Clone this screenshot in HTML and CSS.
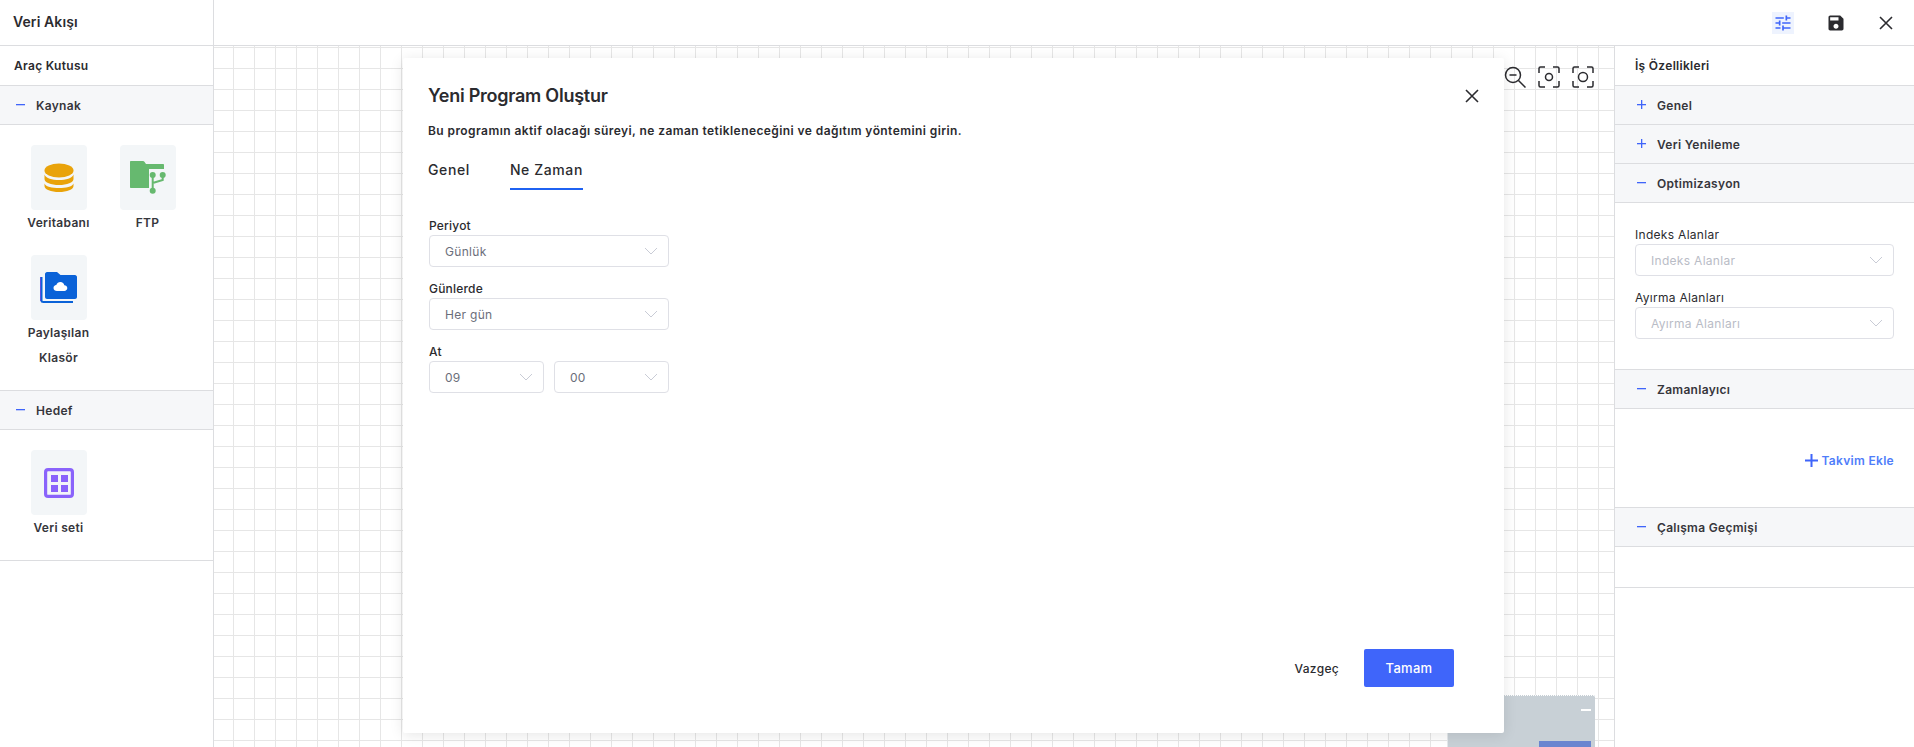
FILE: index.html
```html
<!DOCTYPE html>
<html lang="tr">
<head>
    <meta charset="UTF-8">
    <title>Veri Akışı</title>
    <link rel="stylesheet" href="styles.css">
</head>
<body>
    <header class="topbar">
        <div class="topbar-title">Veri Akışı</div>
        <div class="topbar-actions">
            <button class="icon-btn active">
                <svg width="20" height="20" viewBox="0 0 24 24" fill="#3f65fa"><path d="M3 17v2h6v-2H3zM3 5v2h10V5H3zm10 16v-2h8v-2h-8v-2h-2v6h2zM7 9v2H3v2h4v2h2V9H7zm14 4v-2H11v2h10zm-6-4h2V7h4V5h-4V3h-2v6z"/></svg>
            </button>
            <button class="icon-btn">
                <svg width="20" height="20" viewBox="0 0 24 24" fill="#2b2b2f"><path d="M17 3H5c-1.11 0-2 .9-2 2v14c0 1.1.89 2 2 2h14c1.1 0 2-.9 2-2V7l-4-4zm-5 16c-1.66 0-3-1.34-3-3s1.34-3 3-3 3 1.34 3 3-1.34 3-3 3zm3-10H5V5h10v4z"/></svg>
            </button>
            <button class="icon-btn">
                <svg width="14" height="14" viewBox="0 0 14 14" fill="none" stroke="#2b2b2f" stroke-width="1.6"><path d="M1 1l12 12M13 1L1 13"/></svg>
            </button>
        </div>
    </header>

    <div class="workspace">
        <!-- Toolbox -->
        <aside class="toolbox">
            <div class="panel-title">Araç Kutusu</div>

            <div class="section-head"><span class="sign minus"></span>Kaynak</div>
            <div class="section-body tool-list">
                <div class="tool">
                    <div class="tool-icon">
                        <svg width="30" height="30" viewBox="0 0 30 30" fill="#e9a30a">
                            <ellipse cx="15" cy="7.5" rx="14.5" ry="7"/>
                            <path d="M.5 11.5C2 15.500 8 17 15 17s13-1.500 14.500-5.500V16c0 3.500-6.500 6-14.500 6S.5 19.500.5 16z"/>
                            <path d="M.5 20.500C2 24 8 25 15 25s13-1 14.500-4.500V23c0 3.500-6.500 6-14.500 6S.5 26.500.5 23z"/>
                        </svg>
                    </div>
                    <div class="tool-name">Veritabanı</div>
                </div>
                <div class="tool">
                    <div class="tool-icon">
                        <svg width="36" height="33" viewBox="0 0 36 33">
                            <path fill="#66b96f" d="M0 1c0-.6.4-1 1-1h12c.6 0 1 .3 1.400.8L16 3h17c.6 0 1 .4 1 1v4H19v19H1c-.6 0-1-.4-1-1z"/>
                            <path fill="none" stroke="#66b96f" stroke-width="2" d="M22.700 14v16M32.700 14v5l-10 3"/>
                            <g fill="#66b96f"><circle cx="22.700" cy="14" r="3"/><circle cx="32.700" cy="14" r="3"/><circle cx="22.700" cy="29.700" r="3"/></g>
                        </svg>
                    </div>
                    <div class="tool-name">FTP</div>
                </div>
                <div class="tool">
                    <div class="tool-icon">
                        <svg width="37" height="32" viewBox="0 0 37 32">
                            <path fill="none" stroke="#0a62d8" stroke-width="2" d="M1.500 5v23.500c0 1 1 1.500 2 1.500H33"/>
                            <path fill="#5b4fe0" d="M0 5h1v24H0z"/>
                            <path fill="#0a62d8" d="M5 2c0-1 1-2 2-2h10l3.500 3H35c1 0 2 1 2 2v20c0 1-1 2-2 2H7c-1 0-2-1-2-2z"/>
                            <path fill="#fff" d="M17 19c-2 0-3.500-1.200-3.500-3s1.200-2.800 2.800-3c.6-2 2.300-3 4-3 2.200 0 3.800 1.500 4 3.200 1.700 0 3 1.200 3 2.900s-1.300 2.900-3 2.900z"/>
                        </svg>
                    </div>
                    <div class="tool-name">Paylaşılan Klasör</div>
                </div>
            </div>

            <div class="section-head"><span class="sign minus"></span>Hedef</div>
            <div class="section-body tool-list">
                <div class="tool">
                    <div class="tool-icon">
                        <svg width="30" height="30" viewBox="0 0 30 30">
                            <rect x="1.600" y="1.600" width="26.800" height="26.800" rx="2.500" fill="none" stroke="#8a63fb" stroke-width="3.200"/>
                            <g fill="#8a63fb"><rect x="7" y="7" width="7" height="7"/><rect x="17" y="7" width="7" height="7"/><rect x="7" y="17" width="7" height="7"/><rect x="17" y="17" width="7" height="7"/></g>
                        </svg>
                    </div>
                    <div class="tool-name">Veri seti</div>
                </div>
            </div>
        </aside>

        <!-- Canvas with the modal on top -->
        <main class="canvas">
            <div class="canvas-tools">
                <svg width="22" height="22" viewBox="0 0 22 22" fill="none" stroke="#2b2b2f" stroke-width="1.500"><circle cx="9" cy="9" r="7.500"/><path d="M5.500 9h7M14.500 14.500l7 7"/></svg>
                <svg width="22" height="22" viewBox="0 0 22 22" fill="none" stroke="#2b2b2f" stroke-width="1.500"><path d="M1 7V2.500C1 1.700 1.700 1 2.500 1H7M15 1h4.500c.8 0 1.500.7 1.500 1.500V7M21 15v4.500c0 .8-.7 1.500-1.500 1.500H15M7 21H2.500C1.700 21 1 20.300 1 19.500V15"/><circle cx="11" cy="11" r="3.500"/></svg>
                <svg width="22" height="22" viewBox="0 0 22 22" fill="none" stroke="#2b2b2f" stroke-width="1.500"><path d="M1 7V2.500C1 1.700 1.700 1 2.500 1H7M15 1h4.500c.8 0 1.500.7 1.500 1.500V7M21 15v4.500c0 .8-.7 1.500-1.500 1.500H15M7 21H2.500C1.700 21 1 20.300 1 19.500V15"/><circle cx="11" cy="11" r="4.500"/></svg>
            </div>

            <div class="minimap">
                <span class="minimap-dash"></span>
                <span class="minimap-view"></span>
            </div>

            <div class="modal">
                <button class="modal-close">
                    <svg width="14" height="14" viewBox="0 0 14 14" fill="none" stroke="#2b2b2f" stroke-width="1.600"><path d="M1 1l12 12M13 1L1 13"/></svg>
                </button>
                <h2 class="modal-title">Yeni Program Oluştur</h2>
                <p class="modal-desc">Bu programın aktif olacağı süreyi, ne zaman tetikleneceğini ve dağıtım yöntemini girin.</p>

                <div class="tabs">
                    <div class="tab">Genel</div>
                    <div class="tab selected">Ne Zaman</div>
                </div>

                <div class="form">
                    <label class="form-label">Periyot</label>
                    <div class="select"><span>Günlük</span><svg class="chevron" width="14" height="8" viewBox="0 0 14 8"><path d="M1 1l6 6 6-6"/></svg></div>
                    <label class="form-label">Günlerde</label>
                    <div class="select"><span>Her gün</span><svg class="chevron" width="14" height="8" viewBox="0 0 14 8"><path d="M1 1l6 6 6-6"/></svg></div>
                    <label class="form-label">At</label>
                    <div class="select-row">
                        <div class="select"><span>09</span><svg class="chevron" width="14" height="8" viewBox="0 0 14 8"><path d="M1 1l6 6 6-6"/></svg></div>
                        <div class="select"><span>00</span><svg class="chevron" width="14" height="8" viewBox="0 0 14 8"><path d="M1 1l6 6 6-6"/></svg></div>
                    </div>
                </div>

                <div class="modal-footer">
                    <button class="btn-cancel">Vazgeç</button>
                    <button class="btn-ok">Tamam</button>
                </div>
            </div>
        </main>

        <!-- Job properties -->
        <aside class="props">
            <div class="panel-title">İş Özellikleri</div>

            <div class="section-head"><span class="sign plus"></span>Genel</div>
            <div class="section-head"><span class="sign plus"></span>Veri Yenileme</div>
            <div class="section-head"><span class="sign minus"></span>Optimizasyon</div>
            <div class="section-body opt-body">
                <label class="prop-label">Indeks Alanlar</label>
                <div class="select placeholder"><span>Indeks Alanlar</span><svg class="chevron" width="14" height="8" viewBox="0 0 14 8"><path d="M1 1l6 6 6-6"/></svg></div>
                <label class="prop-label">Ayırma Alanları</label>
                <div class="select placeholder"><span>Ayırma Alanları</span><svg class="chevron" width="14" height="8" viewBox="0 0 14 8"><path d="M1 1l6 6 6-6"/></svg></div>
            </div>

            <div class="section-head"><span class="sign minus"></span>Zamanlayıcı</div>
            <div class="section-body timer-body">
                <a class="add-link"><svg width="13" height="13" viewBox="0 0 13 13" fill="none" stroke="#3f65fa" stroke-width="2"><path d="M6.500 0v13M0 6.500h13"/></svg>Takvim Ekle</a>
            </div>

            <div class="section-head"><span class="sign minus"></span>Çalışma Geçmişi</div>
            <div class="section-body history-body"></div>
        </aside>
    </div>
</body>
</html>
```

FILE: styles.css
```css
/* Common */
* {
    box-sizing: border-box;
}

html, body {
    height: 100%;
}

body {
    margin: 0;
    display: flex;
    flex-direction: column;
    overflow: hidden;
    font-family: Inter, "Noto Sans", sans-serif;
    letter-spacing: 0.3px;
    color: #2b2b2f;
    background-color: #fff;
}

button {
    font-family: inherit;
    letter-spacing: inherit;
    border: none;
    background: none;
    padding: 0;
    cursor: pointer;
}

/* Top bar */
.topbar {
    height: 46px;
    flex: none;
    display: flex;
    align-items: center;
    justify-content: space-between;
    border-bottom: 1px solid #dcdde0;
}

.topbar-title {
    width: 214px;
    height: 100%;
    padding-left: 13px;
    line-height: 44px;
    font-size: 14px;
    font-weight: 600;
    letter-spacing: 0.1px;
    border-right: 1px solid #dcdde0;
}

.topbar-actions {
    display: flex;
    align-items: center;
    gap: 28px;
    padding-right: 17px;
}

.icon-btn {
    width: 22px;
    height: 22px;
    display: flex;
    align-items: center;
    justify-content: center;
}

.icon-btn.active {
    margin-right: 3px;
    background-color: #eef3fe;
}

/* Layout */
.workspace {
    flex: 1;
    display: flex;
    min-height: 0;
}

.toolbox {
    width: 214px;
    flex: none;
    border-right: 1px solid #dcdde0;
    background-color: #fff;
}

.props {
    width: 300px;
    flex: none;
    border-left: 1px solid #dcdde0;
    background-color: #fff;
}

/* Panels */
.panel-title {
    height: 40px;
    padding-left: 14px;
    line-height: 40px;
    font-size: 12px;
    font-weight: 600;
    border-bottom: 1px solid #dcdde0;
}

.props .panel-title {
    padding-left: 20px;
}

.section-head {
    height: 39px;
    display: flex;
    align-items: center;
    padding-left: 16px;
    font-size: 12px;
    font-weight: 600;
    color: #36363c;
    background-color: #f6f7f9;
    border-bottom: 1px solid #dcdde0;
}

.props .section-head {
    padding-left: 22px;
}

.sign {
    position: relative;
    width: 9px;
    height: 9px;
    margin-right: 11px;
}

.sign::before {
    content: "";
    position: absolute;
    left: 0;
    top: 3px;
    width: 9px;
    height: 1px;
    background-color: #3f65fa;
    box-shadow: 0 1px 0 rgba(63, 101, 250, 0.3);
}

.sign.plus::after {
    content: "";
    position: absolute;
    left: 4px;
    top: -1px;
    width: 1px;
    height: 9px;
    background-color: #3f65fa;
    box-shadow: 1px 0 0 rgba(63, 101, 250, 0.3);
}

.section-body {
    border-bottom: 1px solid #dcdde0;
}

/* Toolbox items */
.tool-list {
    display: flex;
    flex-wrap: wrap;
    padding: 20px 0 0 14px;
}

.tool {
    width: 89px;
    margin-bottom: 20px;
    text-align: center;
}

.tool-icon {
    width: 56px;
    height: 65px;
    margin: 0 auto;
    display: flex;
    align-items: center;
    justify-content: center;
    border-radius: 4px;
    background-color: #f3f6f8;
}

.tool-name {
    padding: 0 12px;
    font-size: 12px;
    font-weight: 600;
    line-height: 25px;
    color: #36363c;
}

/* Canvas */
.canvas {
    flex: 1;
    position: relative;
    overflow: hidden;
    background-color: #fff;
    background-image:
        linear-gradient(to right, #e6e6e6 1px, transparent 1px),
        linear-gradient(to bottom, #e6e6e6 1px, transparent 1px);
    background-size: 21px 21px;
    background-position: 19px 1px;
}

.canvas-tools {
    position: absolute;
    top: 20px;
    right: 20px;
    display: flex;
    gap: 12px;
}

.minimap {
    position: absolute;
    left: 1233px;
    top: 649px;
    width: 148px;
    height: 60px;
    background-color: #c8d0d6;
    border-top: 1px dotted #fff;
    border-left: 1px dotted #fff;
    border-radius: 2px;
}

.minimap-dash {
    position: absolute;
    right: 4px;
    top: 13px;
    width: 10px;
    height: 2px;
    background-color: #fff;
}

.minimap-view {
    position: absolute;
    right: 4px;
    top: 45px;
    width: 52px;
    height: 20px;
    background-color: #6a85d0;
}

/* Modal */
.modal {
    position: absolute;
    left: 189px;
    top: 12px;
    width: 1101px;
    height: 675px;
    display: flex;
    flex-direction: column;
    padding: 24px 50px 46px 26px;
    background-color: #fff;
    border-radius: 2px;
    box-shadow: 0 2px 14px rgba(0, 0, 0, 0.1);
}

.modal-close {
    position: absolute;
    right: 25px;
    top: 31px;
    width: 14px;
    height: 14px;
}

.modal-title {
    margin: 0 0 0 -1px;
    font-size: 18px;
    line-height: 27px;
    font-weight: 600;
    letter-spacing: -0.25px;
}

.modal-desc {
    margin: 13px 0 0 -1px;
    font-size: 12px;
    line-height: 18px;
    font-weight: 600;
    letter-spacing: 0.42px;
}

.tabs {
    display: flex;
    gap: 40px;
    margin: 18px 0 0 -1px;
}

.tab {
    height: 32px;
    line-height: 24px;
    font-size: 14px;
    font-weight: 500;
    letter-spacing: 0.6px;
}

.tab.selected {
    border-bottom: 2px solid #1f62f2;
}

/* Form */
.form {
    width: 240px;
    margin-top: 27px;
}

.form-label {
    display: block;
    font-size: 12px;
    font-weight: 500;
    line-height: 18px;
    letter-spacing: 0.2px;
    margin-top: 13px;
}

.form-label:first-child {
    margin-top: 0;
}

.select {
    height: 32px;
    display: flex;
    align-items: center;
    justify-content: space-between;
    padding: 0 10px 0 15px;
    font-size: 12px;
    color: #6b6e7a;
    background-color: #fff;
    border: 1px solid #dfe0e6;
    border-radius: 4px;
}

.select.placeholder {
    color: #b9bcc6;
}

.chevron {
    fill: none;
    stroke: #c9ccd6;
    stroke-width: 1;
}

.select-row {
    display: grid;
    grid-template-columns: 1fr 1fr;
    gap: 10px;
}

/* Modal footer */
.modal-footer {
    margin-top: auto;
    display: flex;
    align-items: center;
    justify-content: flex-end;
    gap: 25px;
}

.btn-cancel {
    font-size: 12px;
    font-weight: 500;
    color: #2b2b2f;
}

.btn-ok {
    width: 90px;
    height: 38px;
    font-size: 13px;
    font-weight: 500;
    color: #fff;
    background-color: #3f65fa;
    border-radius: 2px;
}

/* Properties */
.opt-body {
    padding: 22px 20px 30px;
    height: 167px;
}

.prop-label {
    display: block;
    font-size: 12px;
    line-height: 19px;
    margin-top: 12px;
}

.prop-label:first-child {
    margin-top: 0;
}

.timer-body {
    height: 99px;
    display: flex;
    align-items: center;
    justify-content: flex-end;
    padding: 4px 20px 0;
}

.add-link {
    display: flex;
    align-items: center;
    gap: 4px;
    font-size: 12px;
    font-weight: 600;
    color: #4f7dfa;
}

.history-body {
    height: 41px;
}
```
